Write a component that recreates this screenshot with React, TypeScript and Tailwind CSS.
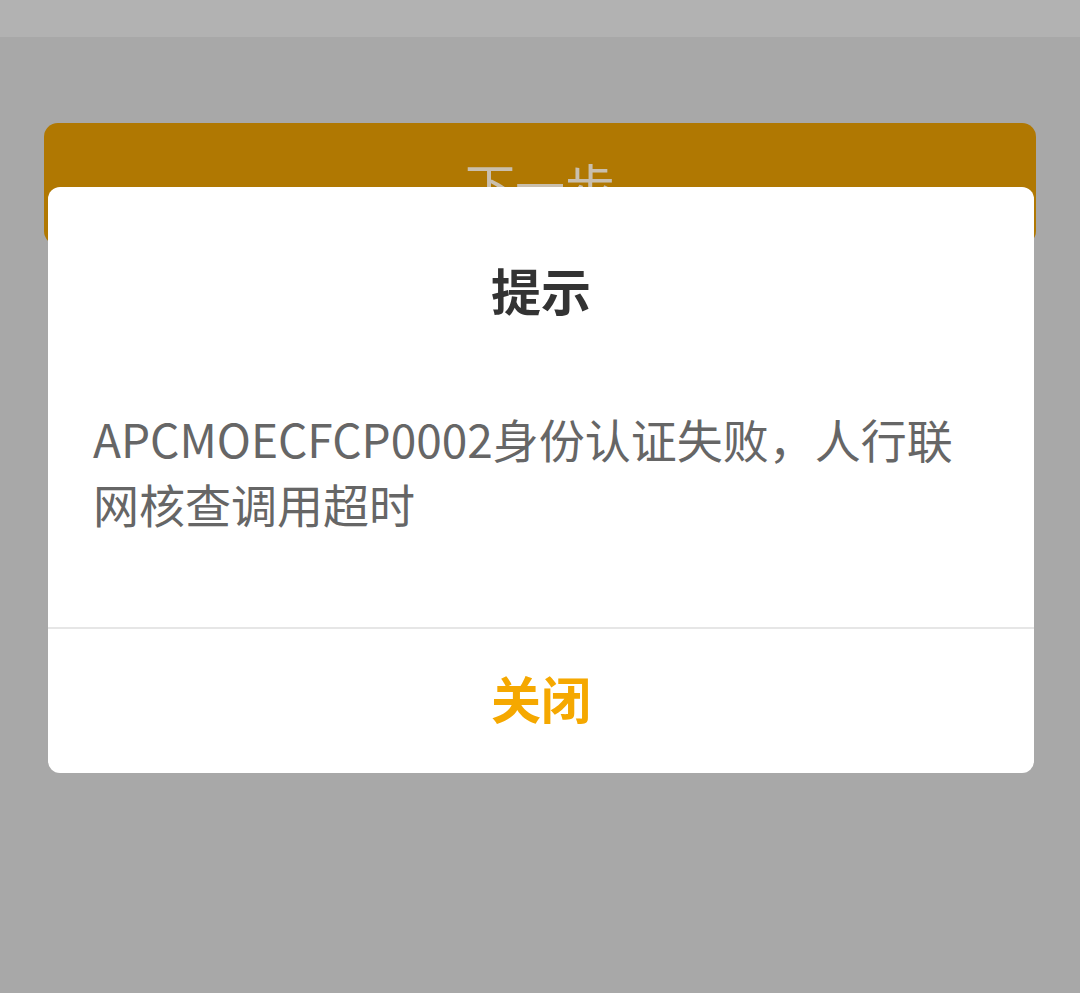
export default function App() {
  return (
    <div
      className="relative h-[993px] w-[1080px] overflow-hidden bg-[#a8a8a8]"
      style={{ fontFamily: '"Noto Sans CJK SC", "Noto Sans", sans-serif' }}
    >
      {/* status bar */}
      <div className="h-[37px] bg-[#b2b2b2]" />

      {/* page content under the mask */}
      <div className="px-[44px] pt-[86px]">
        <div className="flex h-[122px] items-center justify-center rounded-[14px] bg-[#b07802]">
          <span className="text-[50px] leading-none text-[#c9bfae]">下一步</span>
        </div>
      </div>

      {/* dialog */}
      <div className="absolute left-[48px] top-[187px] w-[986px] overflow-hidden rounded-[12px] bg-white">
        <div className="pt-[68px] text-center text-[50px] font-bold leading-[68px] text-[#333333]">
          提示
        </div>
        <div className="px-[45px] pb-[91px] pt-[83px] text-[46px] leading-[65px] text-[#666666]">
          APCMOECFCP0002身份认证失败，人行联网核查调用超时
        </div>
        <div className="h-[2px] bg-[#e6e6e6]" />
        <div className="flex h-[144px] items-center justify-center pb-[8px] text-[50px] font-bold text-[#f5a800]">
          关闭
        </div>
      </div>
    </div>
  );
}
